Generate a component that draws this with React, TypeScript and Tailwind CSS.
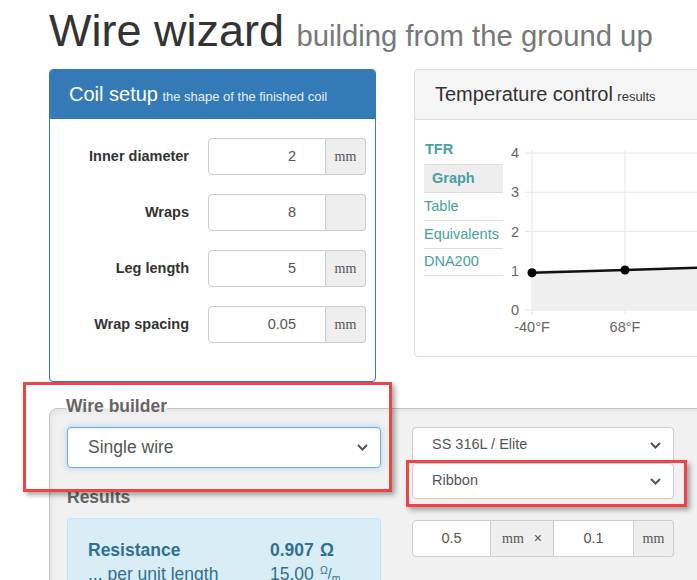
import React from "react";

const teal = "text-[#48a0a0]";

const Chevron = () => (
  <svg width="11" height="7" viewBox="0 0 11 7" className="shrink-0">
    <path d="M1 1 L5.5 5.5 L10 1" fill="none" stroke="#555" strokeWidth="2" />
  </svg>
);

const InputGroup = ({ value, unit }: { value: string; unit: string }) => (
  <div className="flex h-[37px] w-[158px]">
    <div className="flex-1 flex items-center justify-end pr-[29px] border border-[#ccc] rounded-l-[4px] bg-white text-[14.5px] text-[#555]">
      {value}
    </div>
    <div className="w-[40px] flex items-center justify-center border border-l-0 border-[#ccc] rounded-r-[4px] bg-[#eee] font-['Liberation_Serif',serif] text-[14px] text-[#555]">
      {unit}
    </div>
  </div>
);

const CoilRow = ({ label, value, unit }: { label: string; value: string; unit: string }) => (
  <div className="flex items-center gap-[19px]">
    <div className="w-[139px] text-right font-bold text-[14.5px] text-[#333]">{label}</div>
    <InputGroup value={value} unit={unit} />
  </div>
);

const CoilSetup = () => (
  <div className="w-[327px] h-[313px] border border-[#337ab7] rounded-[4px] overflow-hidden bg-white">
    <div className="h-[49px] bg-[#337ab7] pl-[19px] pt-[12px] leading-[24px] text-white">
      <span className="text-[20px]">Coil setup</span>{" "}
      <span className="text-[13px] text-[#e6eef6]">the shape of the finished coil</span>
    </div>
    <div className="pt-[19px] flex flex-col gap-[19px]">
      <CoilRow label="Inner diameter" value="2" unit="mm" />
      <CoilRow label="Wraps" value="8" unit="" />
      <CoilRow label="Leg length" value="5" unit="mm" />
      <CoilRow label="Wrap spacing" value="0.05" unit="mm" />
    </div>
  </div>
);

const Chart = () => {
  const y = (v: number) => 174 - 39.25 * v;
  const pts = [
    [29, y(0.95)],
    [122, y(1.02)],
    [215, y(1.09)],
  ];
  const line = pts.map((p) => p.join(",")).join(" ");
  return (
    <svg width="230" height="210" className="block">
      {[0, 1, 2, 3, 4].map((v) => (
        <g key={v}>
          <line x1="22" x2="230" y1={y(v)} y2={y(v)} stroke="#e6e6e6" strokeWidth="1" />
          <text x="16" y={y(v) + 5} textAnchor="end" fontSize="14.5" fill="#666">
            {v}
          </text>
        </g>
      ))}
      <line x1="29" x2="29" y1="14" y2="179" stroke="#e6e6e6" />
      <line x1="122" x2="122" y1="14" y2="179" stroke="#e6e6e6" />
      <polygon points={`${line} 215,174 29,174`} fill="#efefef" />
      <polyline points={line} fill="none" stroke="#111" strokeWidth="2.5" />
      {pts.map((p, i) => (
        <circle key={i} cx={p[0]} cy={p[1]} r="4.5" fill="#000" />
      ))}
      <text x="29" y="196" textAnchor="middle" fontSize="14.5" fill="#666">
        -40°F
      </text>
      <text x="122" y="196" textAnchor="middle" fontSize="14.5" fill="#666">
        68°F
      </text>
    </svg>
  );
};

const TempControl = () => (
  <div className="w-[330px] h-[288px] border border-[#ddd] rounded-[4px] overflow-hidden bg-white">
    <div className="h-[50px] bg-[#f5f5f5] border-b border-[#ddd] pl-[20px] pt-[12px] leading-[24px] text-[#333]">
      <span className="text-[20px]">Temperature control</span>{" "}
      <span className="text-[13px]">results</span>
    </div>
    <div className="flex pl-[9px] pt-[16px]">
      <div className={`w-[79px] text-[14.5px] ${teal}`}>
        <div className="h-[28px] flex items-center pl-[1px] font-bold">TFR</div>
        <div className="h-[28px] flex items-center pl-[8px] font-bold bg-[#eee] border-t border-[#ddd]">Graph</div>
        <div className="h-[28px] flex items-center border-t border-[#ddd]">Table</div>
        <div className="h-[28px] flex items-center border-t border-[#ddd] whitespace-nowrap">Equivalents</div>
        <div className="h-[28px] flex items-center border-y border-[#ddd]">DNA200</div>
      </div>
      <Chart />
    </div>
  </div>
);

const Select = ({ label, className }: { label: string; className: string }) => (
  <div className={`flex items-center justify-between bg-white rounded-[4px] pr-[12px] text-[#555] ${className}`}>
    <span>{label}</span>
    <Chevron />
  </div>
);

const WireBuilder = () => (
  <fieldset className="mt-[12px] w-[700px] h-[200px] border border-[#c4c4c4] rounded-tl-[8px] bg-[#f1f1f1] shadow-[inset_2px_2px_6px_rgba(0,0,0,0.06)] pl-[17px] pt-[5px]">
    <legend className="-ml-[1px] pb-[4px] text-[17.5px] leading-[24px] font-bold text-[#666]">Wire builder</legend>
    <div className="flex gap-[31px]">
      <div className="w-[314px]">
        <Select
          label="Single wire"
          className="h-[41px] pl-[20px] text-[17.5px] border border-[#66afe9] shadow-[inset_0_1px_1px_rgba(0,0,0,0.075),0_0_6px_rgba(102,175,233,0.5)]"
        />
        <div className="mt-[17px] text-[17.5px] leading-[24px] font-bold text-[#666]">Results</div>
        <div className="mt-[9px] h-[80px] bg-[#d9edf7] border border-[#bce8f1] rounded-[4px] pl-[20px] pt-[19px] text-[17.5px] text-[#31708f]">
          <div className="flex leading-[24px] font-bold">
            <div className="w-[182px]">Resistance</div>
            <div className="w-[50px]">0.907</div>
            <div>Ω</div>
          </div>
          <div className="flex leading-[25px]">
            <div className="w-[182px]">... per unit length</div>
            <div className="w-[50px]">15.00</div>
            <div className="text-[14px]">
              <sup>Ω</sup>/<sub>m</sub>
            </div>
          </div>
        </div>
      </div>
      <div className="w-[262px] text-[14.5px]">
        <Select label="SS 316L / Elite" className="h-[36px] pl-[19px] border border-[#ccc]" />
        <Select label="Ribbon" className="h-[36px] pl-[19px] border border-[#ccc]" />
        <div className="mt-[21px] flex h-[37px] text-[#555]">
          <div className="w-[79px] flex items-center justify-center border border-[#ccc] rounded-l-[4px] bg-white">0.5</div>
          <div className="w-[62px] flex items-center justify-center gap-[10px] border-y border-[#ccc] bg-[#eee] text-[14px]">
            <span className="font-['Liberation_Serif',serif]">mm</span>
            <span>×</span>
          </div>
          <div className="w-[81px] flex items-center justify-center border border-[#ccc] bg-white">0.1</div>
          <div className="w-[40px] flex items-center justify-center border border-l-0 border-[#ccc] rounded-r-[4px] bg-[#eee] font-['Liberation_Serif',serif] text-[14px]">
            mm
          </div>
        </div>
      </div>
    </div>
  </fieldset>
);

export default function App() {
  return (
    <div className="relative w-[697px] h-[580px] overflow-hidden bg-white font-['Liberation_Sans',Arial,sans-serif] text-[#333]">
      <div className="w-[800px] pl-[49px]">
        <h1 className="pt-[6px] h-[57px] text-[45px] leading-[50px] text-[#333] whitespace-nowrap">
          Wire wizard <span className="text-[29.25px] leading-none text-[#777]">building from the ground up</span>
        </h1>
        <div className="mt-[12px] flex items-start gap-[38px]">
          <CoilSetup />
          <TempControl />
        </div>
        <WireBuilder />
      </div>
      <div className="absolute left-[23px] top-[382px] w-[369px] h-[110px] border-[3px] border-[#f04343] shadow-[3px_3px_5px_rgba(0,0,0,0.35)]" />
      <div className="absolute left-[406px] top-[460px] w-[281px] h-[47px] border-[3px] border-[#f04343] shadow-[3px_3px_5px_rgba(0,0,0,0.35)]" />
    </div>
  );
}
